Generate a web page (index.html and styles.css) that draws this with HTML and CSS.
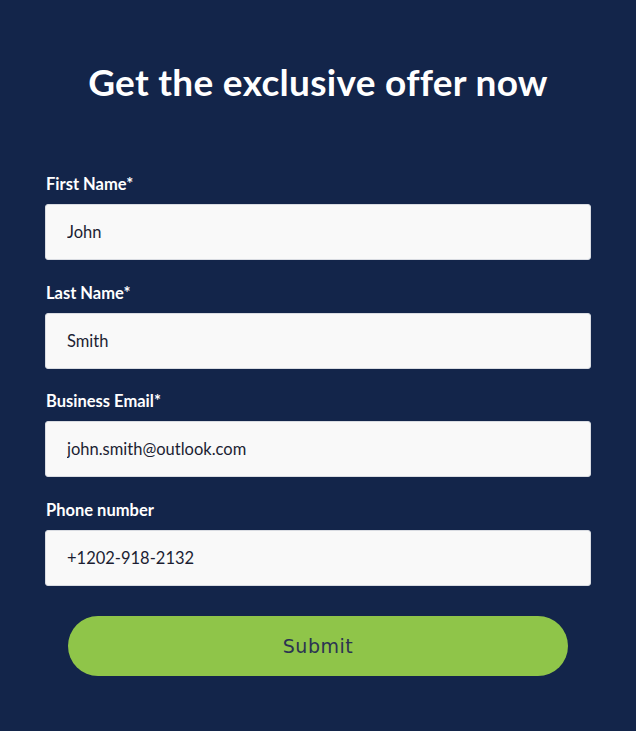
FILE: index.html
```html
<!DOCTYPE html>
<html lang="en">
<head>
<meta charset="utf-8">
<title>Get the exclusive offer now</title>
<link rel="stylesheet" href="styles.css">
</head>
<body>
<main class="panel">
  <h1 class="title">Get the exclusive offer now</h1>
  <form class="form">
    <div class="field">
      <label class="label" for="fn">First Name*</label>
      <input class="input" id="fn" type="text" value="John">
    </div>
    <div class="field">
      <label class="label" for="ln">Last Name*</label>
      <input class="input" id="ln" type="text" value="Smith">
    </div>
    <div class="field">
      <label class="label" for="em">Business Email*</label>
      <input class="input" id="em" type="email" value="john.smith@outlook.com">
    </div>
    <div class="field">
      <label class="label" for="ph">Phone number</label>
      <input class="input" id="ph" type="tel" value="+1202-918-2132">
    </div>
    <button class="submit" type="button">Submit</button>
  </form>
</main>
</body>
</html>
```
FILE: styles.css
```css
html, body {
  margin: 0;
  padding: 0;
  background: #13254a;
}
body {
  font-family: Lato, "Open Sans", sans-serif;
  color: #ffffff;
  height: 731px;
}
.panel {
  padding: 59px 45px 0 45px;
}
.title {
  margin: 0;
  text-align: center;
  font-size: 37px;
  font-weight: 700;
  line-height: 46px;
  letter-spacing: 0.3px;
}
.form {
  margin-top: 69px;
  display: flex;
  flex-direction: column;
}
.field {
  display: flex;
  flex-direction: column;
  margin-bottom: 22.5px;
}
.label {
  font-size: 16.5px;
  font-weight: 700;
  line-height: 20px;
  margin: 0 0 10px 1px;
}
.input {
  box-sizing: border-box;
  height: 56px;
  width: 100%;
  margin: 0;
  padding: 0 21px;
  border: 1px solid #d9dce2;
  border-radius: 3px;
  background: #f9f9f9;
  font-family: Lato, "Open Sans", sans-serif;
  font-size: 16.5px;
  color: #1c1e33;
  outline: none;
}
.submit {
  align-self: center;
  margin-top: 8px;
  width: 500px;
  height: 60px;
  border: none;
  border-radius: 30px;
  background: #8fc549;
  color: #2b3352;
  font-family: "DejaVu Sans", Verdana, sans-serif;
  font-size: 19px;
  letter-spacing: 0.5px;
  cursor: pointer;
}
```
